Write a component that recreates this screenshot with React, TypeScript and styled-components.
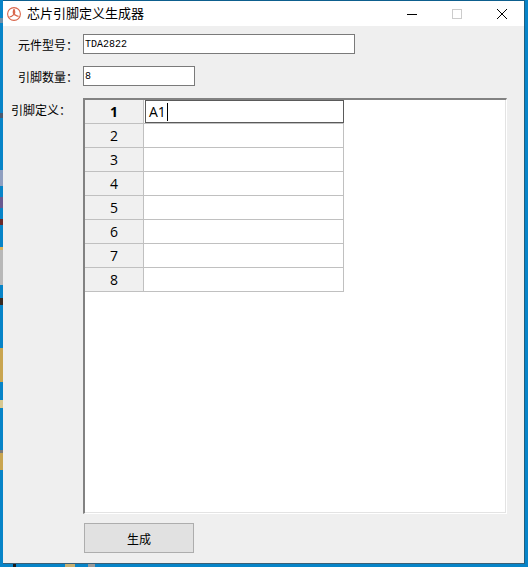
import { FC } from "react";
import styled, { createGlobalStyle } from "styled-components";

const pins = [1, 2, 3, 4, 5, 6, 7, 8];

const BLUE = "#0784c8";

// bits of the desktop that show left of the window
const stripBits = [
    { h: 18, c: BLUE },
    { h: 5, c: "#6f8fa8" },
    { h: 90, c: BLUE },
    { h: 5, c: "#4a5a70" },
    { h: 52, c: BLUE },
    { h: 16, c: "#8f9fc0" },
    { h: 11, c: BLUE },
    { h: 11, c: "#6a5a90" },
    { h: 11, c: BLUE },
    { h: 6, c: "#6b2a2a" },
    { h: 22, c: BLUE },
    { h: 3, c: "#d6b25e" },
    { h: 35, c: "#b8b8b8" },
    { h: 13, c: BLUE },
    { h: 7, c: "#3a2a20" },
    { h: 43, c: BLUE },
    { h: 34, c: "#c9a550" },
    { h: 18, c: BLUE },
    { h: 8, c: "#d8c890" },
    { h: 42, c: BLUE },
    { h: 3, c: "#7a7a7a" },
    { h: 17, c: "#c9a550" },
    { h: 97, c: BLUE },
];

// same thing below the window
const bottomBits = [
    { w: 10, c: BLUE },
    { w: 3, c: "#1a1a1a" },
    { w: 49, c: BLUE },
    { w: 10, c: "#c9b070" },
    { w: 13, c: BLUE },
    { w: 7, c: "#9a9a9a" },
    { w: 430, c: BLUE },
];

export default function App() {
    return (
        <>
            <GlobalStyle />
            <SDesktop>
                <SStrip>
                    {stripBits.map((b, i) => (
                        <SStripBit key={i} $h={b.h} $c={b.c} />
                    ))}
                </SStrip>
                <SMain>
                    <SWindow>
                        <TitleBar />
                        <SBody>
                            <SFormRow>
                                <SLabel>元件型号：</SLabel>
                                <SInput $w={272} readOnly value="TDA2822" />
                            </SFormRow>
                            <SFormRow>
                                <SLabel>引脚数量：</SLabel>
                                <SInput $w={112} readOnly value="8" />
                            </SFormRow>
                            <STableRow>
                                <STableLabel>引脚定义：</STableLabel>
                                <PinTable />
                            </STableRow>
                            <SButton>生成</SButton>
                        </SBody>
                    </SWindow>
                    <SBottomStrip>
                        {bottomBits.map((b, i) => (
                            <SBottomBit key={i} $w={b.w} $c={b.c} />
                        ))}
                    </SBottomStrip>
                </SMain>
            </SDesktop>
        </>
    );
}

const TitleBar: FC = () => (
    <STitleBar>
        <SAppIcon width="16" height="16" viewBox="0 0 16 16">
            <circle cx="8" cy="8" r="6.4" fill="#fff" stroke="#d9654a" strokeWidth="1.1" />
            <path
                d="M8 3.2 C6.9 5.6 7.3 7.4 8 8.3 C6.8 9.6 5.2 10.8 3.4 11 M8 3.2 C9.1 5.6 8.7 7.4 8 8.3 C9.6 9.3 11 10.3 12.6 10.4"
                fill="none"
                stroke="#d9654a"
                strokeWidth="1.2"
            />
        </SAppIcon>
        <STitle>芯片引脚定义生成器</STitle>
        <SWinButtons>
            <SWinButton>
                <svg width="10" height="10" viewBox="0 0 10 10">
                    <path d="M0 5.5H10" stroke="#000" strokeWidth="1" />
                </svg>
            </SWinButton>
            <SWinButton>
                <svg width="10" height="10" viewBox="0 0 10 10">
                    <rect x="0.5" y="0.5" width="9" height="9" fill="none" stroke="#cccccc" strokeWidth="1" />
                </svg>
            </SWinButton>
            <SWinButton>
                <svg width="10" height="10" viewBox="0 0 10 10">
                    <path d="M0 0L10 10M10 0L0 10" stroke="#000" strokeWidth="1" />
                </svg>
            </SWinButton>
        </SWinButtons>
    </STitleBar>
);

const PinTable: FC = () => (
    <STableBox>
        <SGrid>
            {pins.map((n) => (
                <SRow key={n}>
                    <SRowHead $current={n === 1}>{n}</SRowHead>
                    <SCell>
                        {n === 1 && (
                            <SEditor>
                                A1
                                <SCaret />
                            </SEditor>
                        )}
                    </SCell>
                </SRow>
            ))}
        </SGrid>
    </STableBox>
);

const GlobalStyle = createGlobalStyle`
    html, body {
        margin: 0;
        padding: 0;
        background: #0784c8;
    }
`;

const SDesktop = styled.div`
    display: flex;
    width: 528px;
    height: 567px;
    overflow: hidden;
    background: #0784c8;
    font-family: "Noto Sans CJK SC", "Liberation Sans", sans-serif;
`;

const SStrip = styled.div`
    display: flex;
    flex-direction: column;
    flex: none;
    width: 3px;
`;

const SStripBit = styled.div<{ $h: number; $c: string }>`
    flex: none;
    height: ${(p) => p.$h}px;
    background: ${(p) => p.$c};
`;

const SMain = styled.div`
    display: flex;
    flex-direction: column;
    flex: none;
    width: 525px;
`;

const SBottomStrip = styled.div`
    display: flex;
    flex: none;
    height: 3px;
`;

const SBottomBit = styled.div<{ $w: number; $c: string }>`
    flex: none;
    width: ${(p) => p.$w}px;
    background: ${(p) => p.$c};
`;

const SWindow = styled.div`
    display: flex;
    flex-direction: column;
    flex: none;
    box-sizing: border-box;
    width: 522px;
    height: 564px;
    background: #efefef;
    border-top: 1px solid #0d5f8e;
    border-right: 1px solid #1f5f80;
    border-bottom: 1px solid #3a5f76;
`;

const STitleBar = styled.div`
    display: flex;
    align-items: center;
    flex: none;
    height: 25px;
    padding-left: 3px;
    background: #fff;
`;

const SAppIcon = styled.svg`
    flex: none;
`;

const STitle = styled.div`
    margin-left: 5px;
    margin-top: -2px;
    font-size: 13px;
    line-height: 25px;
    color: #000;
`;

const SWinButtons = styled.div`
    display: flex;
    margin-left: auto;
`;

const SWinButton = styled.div`
    display: flex;
    align-items: center;
    justify-content: center;
    width: 45px;
    height: 25px;
`;

const SBody = styled.div`
    display: flex;
    flex-direction: column;
    flex: 1;
    padding: 8px 0 0 80px;
`;

const SFormRow = styled.div`
    position: relative;
    display: flex;
    align-items: center;
    margin-bottom: 12px;
`;

const SLabel = styled.span`
    position: absolute;
    right: 100%;
    margin-right: 5px;
    font-size: 12px;
    white-space: nowrap;
    color: #000;
`;

const SInput = styled.input<{ $w: number }>`
    box-sizing: border-box;
    width: ${(p) => p.$w}px;
    height: 20px;
    padding: 0 1px;
    border: 1px solid #7a7a7a;
    background: #fff;
    outline: none;
    font-family: "Liberation Mono", monospace;
    font-size: 10px;
    color: #000;
`;

const STableRow = styled.div`
    position: relative;
    display: flex;
`;

const STableLabel = styled(SLabel)`
    top: 3px;
    margin-right: 12px;
`;

const STableBox = styled.div`
    box-sizing: border-box;
    width: 424px;
    height: 416px;
    background: #fff;
    border-top: 2px solid #828282;
    border-left: 2px solid #828282;
    border-right: 1px solid #fff;
    border-bottom: 1px solid #fff;
    box-shadow: inset -1px -1px 0 #e3e3e3;
`;

const SGrid = styled.div`
    display: flex;
    flex-direction: column;
    width: 259px;
`;

const SRow = styled.div`
    display: flex;
    height: 24px;
    box-sizing: border-box;
    border-bottom: 1px solid #c0c0c0;
`;

const SRowHead = styled.div<{ $current: boolean }>`
    flex: none;
    box-sizing: border-box;
    width: 59px;
    border-right: 1px solid #c0c0c0;
    background: #f0f0f0;
    text-align: center;
    font-family: "Open Sans", "Liberation Sans", sans-serif;
    font-size: 14px;
    font-weight: ${(p) => (p.$current ? 700 : 400)};
    line-height: 23px;
    color: #000;
`;

const SCell = styled.div`
    position: relative;
    flex: 1;
    border-right: 1px solid #c0c0c0;
`;

const SEditor = styled.div`
    position: absolute;
    top: 0;
    left: 1px;
    right: -1px;
    bottom: 0;
    box-sizing: border-box;
    display: flex;
    align-items: center;
    padding-left: 3px;
    background: #fff;
    border: 1px solid #5a5a5a;
    font-family: "Open Sans", "Liberation Sans", sans-serif;
    font-size: 14px;
    color: #000;
`;

const SCaret = styled.span`
    width: 1px;
    height: 18px;
    margin-left: 1px;
    background: #000;
`;

const SButton = styled.button`
    box-sizing: border-box;
    width: 110px;
    height: 30px;
    margin: 9px 0 0 1px;
    padding: 0;
    border: 1px solid #adadad;
    background: #e1e1e1;
    font-family: "Noto Sans CJK SC", sans-serif;
    font-size: 12px;
    color: #000;
`;
